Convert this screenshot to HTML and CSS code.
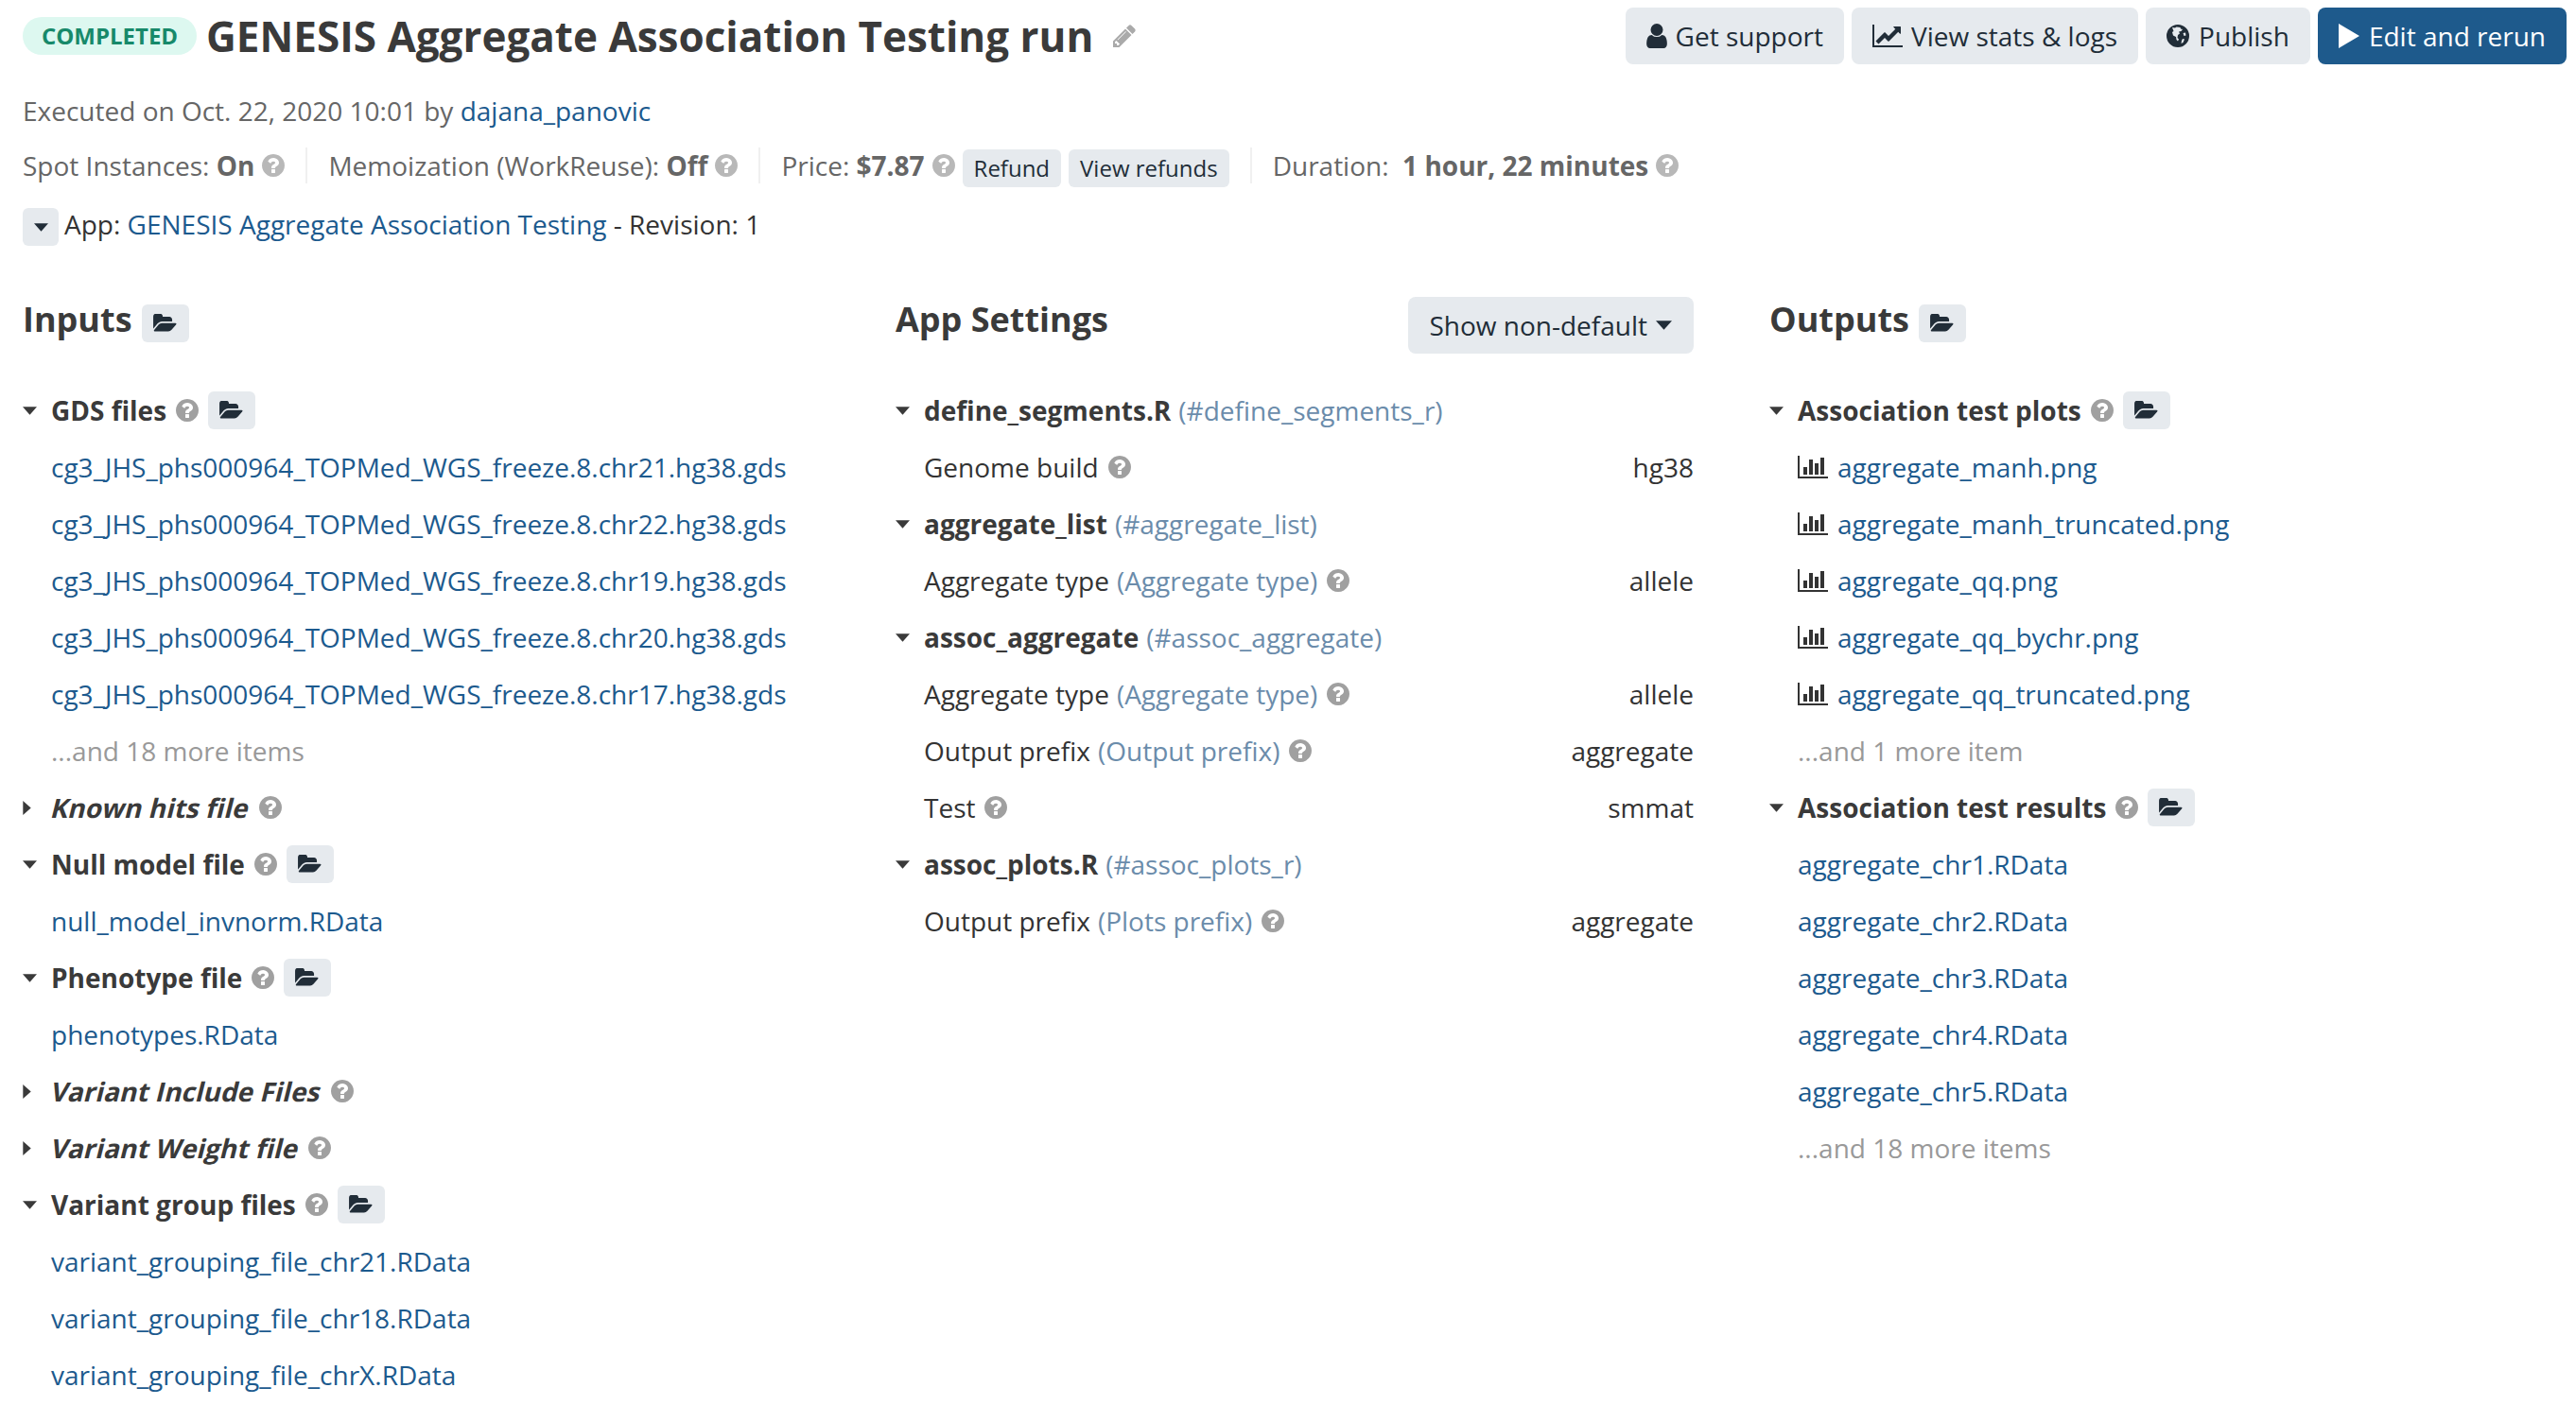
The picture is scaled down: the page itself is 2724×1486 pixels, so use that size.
FILE: index.html
```html
<!DOCTYPE html>
<html lang="en">
<head>
<meta charset="utf-8">
<title>GENESIS Aggregate Association Testing run</title>
<link rel="stylesheet" href="styles.css">
</head>
<body>
<svg class="defs" aria-hidden="true">
  <symbol id="i-help" viewBox="128 128 1536 1536"><path d="M1024 1376v-192q0-14-9-23t-23-9h-192q-14 0-23 9t-9 23v192q0 14 9 23t23 9h192q14 0 23-9t9-23zm256-672q0-88-55.500-163t-138.500-116-170-41q-243 0-371 213-15 24 8 42l132 100q7 6 19 6 16 0 25-12 53-68 86-92 34-24 86-24 48 0 85.500 26t37.500 59q0 38-20 61t-68 45q-63 28-115.500 86.500t-52.500 125.500v36q0 14 9 23t23 9h192q14 0 23-9t9-23q0-19 21.500-49.500t54.500-49.500q32-18 49-28.500t46-35 44.500-48 28-60.500 12.500-81zm384 192q0 209-103 385.500t-279.500 279.500-385.500 103-385.500-103-279.500-279.500-103-385.500 103-385.500 279.500-279.500 385.500-103 385.500 103 279.500 279.500 103 385.500z"/></symbol>
  <symbol id="i-folder" viewBox="0 128 1920 1536"><path d="M1845 931q0 35-53 93l-336 396q-43 51-120.500 86.500t-143.500 35.500h-1088q-34 0-60.500-13t-26.500-43q0-35 53-93l336-396q43-51 120.500-86.500t143.500-35.500h1088q34 0 60.500 13t26.500 43zm-343-344v160h-832q-94 0-197 47.500t-164 119.500l-337 396-5 6q0-4-.5-12.500t-.5-12.500v-960q0-92 66-158t158-66h320q92 0 158 66t66 158v32h544q92 0 158 66t66 158z"/></symbol>
  <symbol id="i-bars" viewBox="0 128 2048 1536"><path d="M640 896v512h-256v-512h256zm384-512v1024h-256v-1024h256zm1024 1152v128h-2048v-1536h128v1408h1920zm-640-896v768h-256v-768h256zm384-384v1152h-256v-1152h256z"/></symbol>
  <symbol id="i-user" viewBox="256 128 1280 1536"><path d="M1536 1399q0 109-62.500 187t-150.500 78h-854q-88 0-150.500-78t-62.500-187q0-85 8.500-160.500t31.500-152 58.500-131 94-89 134.500-34.500q131 128 313 128t313-128q76 0 134.500 34.500t94 89 58.500 131 31.500 152 8.500 160.500zm-256-887q0 159-112.500 271.500t-271.500 112.500-271.500-112.500-112.500-271.500 112.500-271.500 271.500-112.500 271.500 112.500 112.500 271.500z"/></symbol>
  <symbol id="i-chart" viewBox="0 128 2048 1536"><path d="M2048 1536v128h-2048v-1536h128v1408h1920zm-128-1248v435q0 21-19.500 29.500t-35.500-7.500l-121-121-633 633q-10 10-23 10t-23-10l-233-233-416 416-192-192 585-585q10-10 23-10t23 10l233 233 464-464-121-121q-16-16-7.500-35.500t29.500-19.500h435q14 0 23 9t9 23z"/></symbol>
  <symbol id="i-pencil" viewBox="128 128 1536 1536"><path d="M491 1536l91-91-235-235-91 91v107h128v128h107zm523-928q0-22-22-22-10 0-17 7l-542 542q-7 7-7 17 0 22 22 22 10 0 17-7l542-542q7-7 7-17zm-54-192l416 416-832 832h-416v-416zm683 96q0 53-37 90l-166 166-416-416 166-165q36-38 90-38 53 0 91 38l235 234q37 39 37 91z"/></symbol>
  <symbol id="i-globe" viewBox="0 0 24 24"><path fill-rule="evenodd" d="M12 0a12 12 0 1 0 0 24 12 12 0 0 0 0-24zM6 3l3 .5 1.500-1 4 .5.500 1.500 2 .5-1.500 2-2.500.5 1 2-2 1.500-.5 3 1.500 1.500-1 2-1.500-1.500-.5-3-3-1.500-1-3.500 1.500-1zM17.500 9l2.500-.5.500 3-2 .5zM17 15l2 .5-1.500 3.500-2 1 .5-3z"/></symbol>
  <symbol id="i-down" viewBox="0 0 16 9"><path d="M0 0h16l-8 9z"/></symbol>
  <symbol id="i-right" viewBox="0 0 9 16"><path d="M0 0l9 8-9 8z"/></symbol>
  <symbol id="i-play" viewBox="0 0 22 26"><path d="M0 0l22 13-22 13z"/></symbol>
</svg>

<header class="topbar">
  <div class="title-group">
    <span class="badge">COMPLETED</span>
    <h1 class="title">GENESIS Aggregate Association Testing run</h1>
    <svg class="pencil"><use href="#i-pencil"/></svg>
  </div>
  <div class="actions">
    <a class="btn"><svg class="btn-ico ico-user"><use href="#i-user"/></svg>Get support</a>
    <a class="btn"><svg class="btn-ico ico-chart"><use href="#i-chart"/></svg>View stats &amp; logs</a>
    <a class="btn"><svg class="btn-ico ico-globe"><use href="#i-globe"/></svg>Publish</a>
    <a class="btn btn-primary"><svg class="btn-ico ico-play"><use href="#i-play"/></svg>Edit and rerun</a>
  </div>
</header>

<div class="meta">
  <div class="meta-line">Executed on Oct. 22, 2020 10:01 by <a class="link">dajana_panovic</a></div>
  <div class="stats">
    <div class="stat">Spot Instances:&nbsp;<b>On</b><svg class="help help-light"><use href="#i-help"/></svg></div>
    <div class="stat">Memoization (WorkReuse):&nbsp;<b>Off</b><svg class="help help-light"><use href="#i-help"/></svg></div>
    <div class="stat">Price:&nbsp;<b>$7.87</b><svg class="help help-light"><use href="#i-help"/></svg><a class="btn-sm">Refund</a><a class="btn-sm">View refunds</a></div>
    <div class="stat">Duration:&nbsp;&nbsp;<b>1 hour, 22 minutes</b><svg class="help help-light"><use href="#i-help"/></svg></div>
  </div>
  <div class="app-line"><span class="app-toggle"><svg class="caret-down toggle-caret"><use href="#i-down"/></svg></span><span class="app-text">App: <a class="link">GENESIS Aggregate Association Testing</a> - Revision: 1</span></div>
</div>

<main class="columns">
  <section class="col">
    <div class="col-head"><h2 class="heading">Inputs</h2><a class="folder"><svg><use href="#i-folder"/></svg></a></div>
    <div class="row group"><svg class="caret-down"><use href="#i-down"/></svg><b>GDS files</b><svg class="help"><use href="#i-help"/></svg><a class="folder"><svg><use href="#i-folder"/></svg></a></div>
    <div class="row item"><a class="link">cg3_JHS_phs000964_TOPMed_WGS_freeze.8.chr21.hg38.gds</a></div>
    <div class="row item"><a class="link">cg3_JHS_phs000964_TOPMed_WGS_freeze.8.chr22.hg38.gds</a></div>
    <div class="row item"><a class="link">cg3_JHS_phs000964_TOPMed_WGS_freeze.8.chr19.hg38.gds</a></div>
    <div class="row item"><a class="link">cg3_JHS_phs000964_TOPMed_WGS_freeze.8.chr20.hg38.gds</a></div>
    <div class="row item"><a class="link">cg3_JHS_phs000964_TOPMed_WGS_freeze.8.chr17.hg38.gds</a></div>
    <div class="row item more">...and 18 more items</div>
    <div class="row group"><svg class="caret-right"><use href="#i-right"/></svg><b class="opt">Known hits file</b><svg class="help"><use href="#i-help"/></svg></div>
    <div class="row group"><svg class="caret-down"><use href="#i-down"/></svg><b>Null model file</b><svg class="help"><use href="#i-help"/></svg><a class="folder"><svg><use href="#i-folder"/></svg></a></div>
    <div class="row item"><a class="link">null_model_invnorm.RData</a></div>
    <div class="row group"><svg class="caret-down"><use href="#i-down"/></svg><b>Phenotype file</b><svg class="help"><use href="#i-help"/></svg><a class="folder"><svg><use href="#i-folder"/></svg></a></div>
    <div class="row item"><a class="link">phenotypes.RData</a></div>
    <div class="row group"><svg class="caret-right"><use href="#i-right"/></svg><b class="opt">Variant Include Files</b><svg class="help"><use href="#i-help"/></svg></div>
    <div class="row group"><svg class="caret-right"><use href="#i-right"/></svg><b class="opt">Variant Weight file</b><svg class="help"><use href="#i-help"/></svg></div>
    <div class="row group"><svg class="caret-down"><use href="#i-down"/></svg><b>Variant group files</b><svg class="help"><use href="#i-help"/></svg><a class="folder"><svg><use href="#i-folder"/></svg></a></div>
    <div class="row item"><a class="link">variant_grouping_file_chr21.RData</a></div>
    <div class="row item"><a class="link">variant_grouping_file_chr18.RData</a></div>
    <div class="row item"><a class="link">variant_grouping_file_chrX.RData</a></div>
  </section>

  <section class="col col-mid">
    <div class="col-head col-head-split"><h2 class="heading">App Settings</h2><a class="btn">Show non-default<svg class="caret-down dd-caret"><use href="#i-down"/></svg></a></div>
    <div class="row group"><svg class="caret-down"><use href="#i-down"/></svg><b>define_segments.R</b><span class="ref">(#define_segments_r)</span></div>
    <div class="row item param"><span>Genome build</span><svg class="help"><use href="#i-help"/></svg><span class="val">hg38</span></div>
    <div class="row group"><svg class="caret-down"><use href="#i-down"/></svg><b>aggregate_list</b><span class="ref">(#aggregate_list)</span></div>
    <div class="row item param"><span>Aggregate type</span><span class="ref">(Aggregate type)</span><svg class="help"><use href="#i-help"/></svg><span class="val">allele</span></div>
    <div class="row group"><svg class="caret-down"><use href="#i-down"/></svg><b>assoc_aggregate</b><span class="ref">(#assoc_aggregate)</span></div>
    <div class="row item param"><span>Aggregate type</span><span class="ref">(Aggregate type)</span><svg class="help"><use href="#i-help"/></svg><span class="val">allele</span></div>
    <div class="row item param"><span>Output prefix</span><span class="ref">(Output prefix)</span><svg class="help"><use href="#i-help"/></svg><span class="val">aggregate</span></div>
    <div class="row item param"><span>Test</span><svg class="help"><use href="#i-help"/></svg><span class="val">smmat</span></div>
    <div class="row group"><svg class="caret-down"><use href="#i-down"/></svg><b>assoc_plots.R</b><span class="ref">(#assoc_plots_r)</span></div>
    <div class="row item param"><span>Output prefix</span><span class="ref">(Plots prefix)</span><svg class="help"><use href="#i-help"/></svg><span class="val">aggregate</span></div>
  </section>

  <section class="col">
    <div class="col-head"><h2 class="heading">Outputs</h2><a class="folder"><svg><use href="#i-folder"/></svg></a></div>
    <div class="row group"><svg class="caret-down"><use href="#i-down"/></svg><b>Association test plots</b><svg class="help"><use href="#i-help"/></svg><a class="folder"><svg><use href="#i-folder"/></svg></a></div>
    <div class="row item"><svg class="bars"><use href="#i-bars"/></svg><a class="link">aggregate_manh.png</a></div>
    <div class="row item"><svg class="bars"><use href="#i-bars"/></svg><a class="link">aggregate_manh_truncated.png</a></div>
    <div class="row item"><svg class="bars"><use href="#i-bars"/></svg><a class="link">aggregate_qq.png</a></div>
    <div class="row item"><svg class="bars"><use href="#i-bars"/></svg><a class="link">aggregate_qq_bychr.png</a></div>
    <div class="row item"><svg class="bars"><use href="#i-bars"/></svg><a class="link">aggregate_qq_truncated.png</a></div>
    <div class="row item more">...and 1 more item</div>
    <div class="row group"><svg class="caret-down"><use href="#i-down"/></svg><b>Association test results</b><svg class="help"><use href="#i-help"/></svg><a class="folder"><svg><use href="#i-folder"/></svg></a></div>
    <div class="row item"><a class="link">aggregate_chr1.RData</a></div>
    <div class="row item"><a class="link">aggregate_chr2.RData</a></div>
    <div class="row item"><a class="link">aggregate_chr3.RData</a></div>
    <div class="row item"><a class="link">aggregate_chr4.RData</a></div>
    <div class="row item"><a class="link">aggregate_chr5.RData</a></div>
    <div class="row item more">...and 18 more items</div>
  </section>
</main>
</body>
</html>
```
FILE: styles.css
```css
* { box-sizing: border-box; }
html, body { margin: 0; padding: 0; background: #fff; }
body {
  padding: 8px 10px 0 24px;
  font-family: "Open Sans", sans-serif;
  font-size: 28px;
  line-height: 40px;
  color: #333;
  overflow: hidden;
  height: 1486px;
}
.defs { position: absolute; width: 0; height: 0; }
svg { fill: currentColor; flex: none; display: block; }
b { font-weight: 700; }
.link { color: #1c5a8e; white-space: nowrap; }

.topbar { display: flex; justify-content: space-between; align-items: center; height: 60px; }
.title-group { display: flex; align-items: center; }
.badge {
  height: 40px; width: 184px;
  display: flex; align-items: center; justify-content: center;
  border-radius: 20px;
  background: #ddf8f0; color: #17896a;
  font-size: 24px; font-weight: 700;
}
.title { margin: 0 0 0 10px; font-size: 44px; line-height: 60px; font-weight: 700; color: #3a3a3a; }
.pencil { width: 24px; height: 24px; margin-left: 21px; color: #aaa; }
.actions { display: flex; gap: 8px; }
.btn {
  display: flex; align-items: center;
  height: 60px; padding: 0 22px;
  background: #e6eaee; color: #212d38;
  border-radius: 8px;
  white-space: nowrap;
}
.btn-primary { background: #1e5a8c; color: #fff; }
.btn-ico { margin-right: 9px; }
.ico-user { width: 22px; height: 26px; }
.ico-chart { width: 32px; height: 24px; }
.ico-globe { width: 24px; height: 24px; margin-right: 10px; }
.ico-play { width: 22px; height: 26px; margin-right: 10px; }

.meta { margin-top: 19px; color: #666; }
.meta-line { height: 58px; line-height: 60px; }
.stats { display: flex; height: 60px; align-items: center; }
.stat {
  display: flex; align-items: center;
  height: 38px; padding: 0 22px;
  border-left: 2px solid #f0f0f0;
}
.stat:first-child { padding-left: 0; border-left: 0; }
.help { width: 24px; height: 24px; margin-left: 10px; color: #a0a0a0; }
.help-light { color: #b8b8b8; margin-left: 8px; }
.btn-sm {
  display: flex; align-items: center;
  height: 40px; padding: 0 12px; margin: 6px 0 0 8px;
  background: #e6eaee; color: #212d38;
  border-radius: 6px;
  font-size: 24px;
}
.app-line { display: flex; align-items: center; height: 40px; margin-top: 15px; color: #333; }
.app-text { margin-top: -6px; white-space: nowrap; }
.app-toggle {
  display: flex; align-items: center; justify-content: center;
  width: 38px; height: 40px; margin-right: 6px;
  background: #e6eaee; border-radius: 6px;
}
.toggle-caret { color: #212d38; }

.columns {
  display: grid;
  grid-template-columns: 923px 924px 1fr;
  margin-top: 54px;
}
.col { min-width: 0; }
.col-mid { padding-right: 80px; }
.col-head { display: flex; align-items: center; height: 60px; margin-bottom: 30px; gap: 10px; }
.col-head-split { justify-content: space-between; }
.heading { margin: -12px 0 0; font-size: 36px; line-height: 48px; font-weight: 700; color: #3a3a3a; }
.col-head .btn { padding: 0 23px 0 22px; }
.col-head > .folder { margin-top: -4px; }
.folder {
  display: flex; align-items: center; justify-content: center;
  width: 50px; height: 40px;
  background: #e6eaee; color: #212d38;
  border-radius: 6px;
}
.folder svg { width: 26px; height: 20px; }
.row { display: flex; align-items: center; height: 60px; white-space: nowrap; }
.group b { color: #3a3a3a; }
.group .folder { margin-left: 10px; }
.opt { display: inline-block; transform: skewX(-14deg); margin-left: 1px; }
.caret-down { width: 15px; height: 9px; margin-right: 15px; }
.caret-right { width: 9px; height: 15px; margin-right: 21px; }
.group svg.caret-down, .group svg.caret-right { color: #3a3a3a; }
.toggle-caret { margin-right: 0; }
.dd-caret { width: 17px; height: 10px; margin: 0 0 0 9px; color: #212d38; }
.item { padding-left: 30px; }
.more { color: #999; }
.ref { color: #6b8cab; margin-left: 8px; }
.val { margin-left: auto; }
.bars { width: 32px; height: 24px; margin-right: 10px; color: #333; }
```
